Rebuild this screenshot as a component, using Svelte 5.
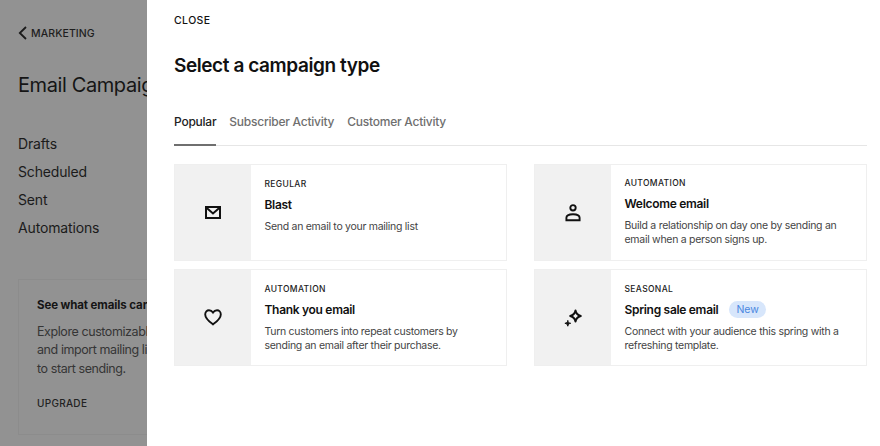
<script>
  const tabs = ['Popular', 'Subscriber Activity', 'Customer Activity'];
  const navItems = ['Drafts', 'Scheduled', 'Sent', 'Automations'];

  const campaigns = [
    { id: 'blast', label: 'REGULAR', title: 'Blast', text: ['Send an email to your mailing list'], icon: 'mail' },
    { id: 'welcome', label: 'AUTOMATION', title: 'Welcome email', text: ['Build a relationship on day one by sending an', 'email when a person signs up.'], icon: 'person' },
    { id: 'thanks', label: 'AUTOMATION', title: 'Thank you email', text: ['Turn customers into repeat customers by', 'sending an email after their purchase.'], icon: 'heart' },
    { id: 'spring', label: 'SEASONAL', title: 'Spring sale email', text: ['Connect with your audience this spring with a', 'refreshing template.'], icon: 'sparkle', badge: 'New' }
  ];
</script>

<div class="page">
  <aside class="side">
    <div class="back">
      <svg width="10" height="14" viewBox="0 0 10 14" fill="none" stroke="#1b1b1b" stroke-width="1.8"><path d="M8 1 1.800 7 8 13" /></svg>
      <span>MARKETING</span>
    </div>
    <h2>Email Campaigns</h2>
    <nav>
      {#each navItems as item}
        <div class="nav-item">{item}</div>
      {/each}
    </nav>
    <div class="promo">
      <strong>See what emails can do</strong>
      <p>Explore customizable layouts<br />and import mailing lists<br />to start sending.</p>
      <div class="upgrade">UPGRADE</div>
    </div>
  </aside>

  <main class="panel">
    <div class="close">CLOSE</div>
    <h1>Select a campaign type</h1>
    <div class="tabs">
      {#each tabs as tab, i}
        <div class="tab" class:active={i === 0}>{tab}</div>
      {/each}
    </div>
    <div class="grid">
      {#each campaigns as c}
        <div class="card">
          <div class="thumb">
            {#if c.icon === 'mail'}
              <svg width="16" height="13" viewBox="0 0 16 13" fill="none" stroke="#111" stroke-width="2"><rect x="1" y="1" width="14" height="11" /><path d="M1.200 1.400 8 7.400l6.800-6" /></svg>
            {:else if c.icon === 'person'}
              <svg width="16" height="18" viewBox="0 0 16 18" fill="none" stroke="#111" stroke-width="1.900"><circle cx="8" cy="3.800" r="2.700" /><path d="M1.400 16.200v-2.400c0-2.200 2.600-3.600 6.600-3.600s6.600 1.400 6.600 3.600v2.400z" /></svg>
            {:else if c.icon === 'heart'}
              <svg width="18" height="17" viewBox="0 0 18 17" fill="none" stroke="#111" stroke-width="1.900"><path d="M9 15.400C5.600 12.800 1.200 9.600 1.200 5.400 1.200 2.800 3 1.200 5 1.200c1.700 0 3.100 1 4 2.400.9-1.400 2.300-2.400 4-2.400 2 0 3.800 1.600 3.800 4.200 0 4.200-4.400 7.400-7.800 10z" /></svg>
            {:else}
              <svg width="20" height="20" viewBox="0 0 20 20" fill="none"><path d="M12.500 2.500c.6 3.300 1.900 4.700 5.300 5.500-3.400.8-4.700 2.200-5.300 5.500-.6-3.300-1.900-4.700-5.300-5.500 3.400-.8 4.700-2.200 5.300-5.500z" stroke="#111" stroke-width="2" stroke-linejoin="round" /><path d="M4.800 12.400c.3 1.900 1 2.600 2.900 2.900-1.900.3-2.600 1-2.900 2.900-.3-1.900-1-2.600-2.900-2.900 1.900-.3 2.600-1 2.900-2.900z" fill="#111" stroke="#111" stroke-width="1" stroke-linejoin="round" /></svg>
            {/if}
          </div>
          <div class="body">
            <div class="label">{c.label}</div>
            <div class="title">
              {c.title}
              {#if c.badge}
                <span class="badge">{c.badge}</span>
              {/if}
            </div>
            <p class="text">
              {#each c.text as line}
                <span>{line}</span>
              {/each}
            </p>
          </div>
        </div>
      {/each}
    </div>
  </main>
</div>

<style>
  :global(body) {
    margin: 0;
    background: #fff;
  }

  .page {
    display: flex;
    width: 880px;
    height: 446px;
    overflow: hidden;
    font-family: Inter, "Open Sans", sans-serif;
    color: #111;
  }

  .side {
    flex: 0 0 147px;
    width: 147px;
    box-sizing: border-box;
    padding: 26px 0 0 18px;
    overflow: hidden;
    background: #929292;
    color: #151515;
    white-space: nowrap;
  }

  .back {
    display: flex;
    align-items: center;
    gap: 3px;
    height: 14px;
    font-size: 10.500px;
    font-weight: 500;
    letter-spacing: 0.1px;
    color: #1e1e1e;
  }

  .side h2 {
    margin: 30px 0 0;
    font-size: 20px;
    line-height: 30px;
    font-weight: 400;
    letter-spacing: -0.4px;
  }

  nav {
    margin-top: 30px;
  }

  .nav-item {
    height: 28px;
    font-size: 14px;
    line-height: 28px;
    letter-spacing: -0.15px;
    color: #1b1b1b;
  }

  .promo {
    width: 240px;
    height: 156px;
    box-sizing: border-box;
    margin-top: 37px;
    padding: 17px 18px;
    border: 1px solid #8c8c8c;
  }

  .promo strong {
    display: block;
    font-size: 11.500px;
    line-height: 16px;
    font-weight: 700;
    letter-spacing: -0.1px;
  }

  .promo p {
    margin: 10px 0 0;
    font-size: 12.500px;
    line-height: 18.300px;
    letter-spacing: -0.42px;
    color: #353535;
  }

  .upgrade {
    margin-top: 18px;
    font-size: 10px;
    line-height: 14px;
    font-weight: 500;
    letter-spacing: 0.3px;
    color: #222;
  }

  .panel {
    flex: 1;
    box-sizing: border-box;
    padding: 14px 13px 0 27px;
    background: #fff;
  }

  .close {
    font-size: 10.500px;
    line-height: 14px;
    font-weight: 500;
    letter-spacing: 0.4px;
  }

  h1 {
    margin: 24px 0 0;
    font-size: 19px;
    line-height: 28px;
    font-weight: 600;
    letter-spacing: -0.42px;
  }

  .tabs {
    display: flex;
    gap: 13px;
    margin-top: 27px;
    border-bottom: 1px solid #e6e6e6;
  }

  .tab {
    height: 31px;
    padding-top: 7px;
    font-size: 12px;
    line-height: 16px;
    font-weight: 500;
    letter-spacing: -0.24px;
    color: #6f6f6f;
  }

  .tab.active {
    color: #222;
    box-shadow: 0 1px 0 #6f6f6f, inset 0 -1px 0 #6f6f6f;
  }

  .grid {
    display: grid;
    grid-template-columns: 333px 333px;
    grid-auto-rows: 97px;
    column-gap: 27px;
    row-gap: 8px;
    margin-top: 18px;
  }

  .card {
    display: flex;
    box-sizing: border-box;
    border: 1px solid #efefef;
  }

  .card:nth-child(2) .body {
    padding-top: 12px;
  }

  .thumb {
    flex: 0 0 76px;
    display: flex;
    align-items: center;
    justify-content: center;
    background: #f1f1f1;
  }

  .body {
    padding: 13px 13px 0 13.500px;
  }

  .label {
    font-size: 8.500px;
    line-height: 12px;
    font-weight: 500;
    letter-spacing: 0.35px;
    color: #222;
  }

  .title {
    display: flex;
    align-items: center;
    gap: 11px;
    height: 20px;
    margin-top: 4px;
    font-size: 12px;
    font-weight: 600;
    letter-spacing: -0.3px;
    color: #111;
  }

  .badge {
    padding: 0 7px;
    height: 17px;
    border-radius: 9px;
    background: #d7e6fb;
    color: #4a86e0;
    font-size: 10.500px;
    line-height: 17px;
    font-weight: 400;
    letter-spacing: 0;
  }

  .text {
    margin: 6px 0 0;
    font-size: 10.500px;
    line-height: 14px;
    letter-spacing: -0.28px;
    color: #444;
  }

  .text span {
    display: block;
    white-space: nowrap;
  }
</style>
